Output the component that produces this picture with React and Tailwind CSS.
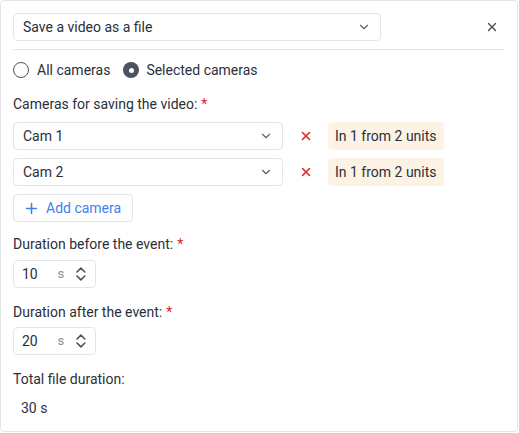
import { ChevronDown, X, Plus } from 'lucide-react'

const FONT = { fontFamily: 'Roboto, "Liberation Sans", sans-serif' }

function Select({ value, className = '' }) {
  return (
    <div className={`h-7 flex items-center justify-between pl-[9px] pr-[9px] border border-[#e3e5e8] rounded-[4px] bg-white ${className}`}>
      <span className="text-[14px] text-[#2a2f3a]">{value}</span>
      <ChevronDown size={14} strokeWidth={2} className="text-[#5b6270]" />
    </div>
  )
}

function Label({ text, required }) {
  return (
    <div className="text-[14px] leading-5 text-[#2a2f3a]">
      {text}
      {required && <span className="text-[#e02424] ml-[4px]">*</span>}
    </div>
  )
}

function NumberInput({ value }) {
  return (
    <div className="h-7 w-[83px] flex items-center border border-[#e3e5e8] rounded-[4px] pl-[8px] pr-[8px]">
      <span className="text-[14px] text-[#2a2f3a] w-[36px]">{value}</span>
      <span className="text-[13px] text-[#8a909b] w-[18px]">s</span>
      <svg width="12" height="16" viewBox="0 0 12 16" fill="none" stroke="#4b5260" strokeWidth="1.6" strokeLinecap="round" strokeLinejoin="round">
        <path d="M2 6l4-4 4 4" />
        <path d="M2 10l4 4 4-4" />
      </svg>
    </div>
  )
}

function CameraRow({ name }) {
  return (
    <div className="flex items-center">
      <Select value={name} className="w-[270px]" />
      <X size={14} strokeWidth={2.6} className="text-[#e02424] ml-[16px]" />
      <div className="ml-[15px] h-7 px-[7px] flex items-center rounded-[4px] bg-[#fdf3e4] text-[14px] text-[#2a2f3a]">
        In 1 from 2 units
      </div>
    </div>
  )
}

export default function App() {
  return (
    <div style={FONT} className="w-[518px] h-[433px] bg-white">
      <div className="h-[432px] border border-[#e3e5e8] rounded-[4px] px-3 pt-3">
        <div className="flex items-center">
          <Select value="Save a video as a file" className="w-[368px]" />
          <div className="flex-1 flex justify-end pr-[6px]">
            <X size={14} strokeWidth={2.4} className="text-[#4b5260]" />
          </div>
        </div>
        <div className="mt-2 border-t border-[#e3e5e8]" />

        <div className="mt-3 flex items-center h-4">
          <span className="w-4 h-4 rounded-full border border-[#4b5260]" />
          <span className="ml-2 text-[14px] text-[#2a2f3a]">All cameras</span>
          <span className="ml-[13px] w-4 h-4 rounded-full bg-[#4b5260] flex items-center justify-center">
            <span className="w-[5px] h-[5px] rounded-full bg-white" />
          </span>
          <span className="ml-[7px] text-[14px] text-[#2a2f3a]">Selected cameras</span>
        </div>

        <div className="mt-4">
          <Label text="Cameras for saving the video:" required />
        </div>
        <div className="mt-2 flex flex-col gap-2">
          <CameraRow name="Cam 1" />
          <CameraRow name="Cam 2" />
          <div className="h-7 w-[120px] flex items-center border border-[#e3e5e8] rounded-[4px] pl-[9px]">
            <Plus size={17} strokeWidth={2.2} className="text-[#3d82f0]" />
            <span className="ml-[6px] text-[14px] text-[#3d82f0]">Add camera</span>
          </div>
        </div>

        <div className="mt-3">
          <Label text="Duration before the event:" required />
        </div>
        <div className="mt-[6px]">
          <NumberInput value="10" />
        </div>

        <div className="mt-[14px]">
          <Label text="Duration after the event:" required />
        </div>
        <div className="mt-[5px]">
          <NumberInput value="20" />
        </div>

        <div className="mt-[14px]">
          <Label text="Total file duration:" />
        </div>
        <div className="mt-[9px] pl-[8px] text-[14px] leading-5 text-[#2a2f3a]">30 s</div>
      </div>
    </div>
  )
}
